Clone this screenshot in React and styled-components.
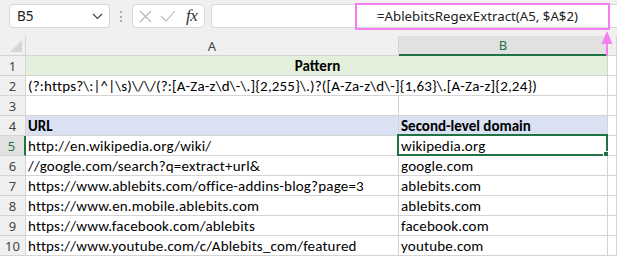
import React from "react";
import styled, { createGlobalStyle } from "styled-components";

const Global = createGlobalStyle`
  html, body { margin: 0; padding: 0; background: #f0f0f0; }
  body { width: 617px; height: 256px; overflow: hidden; }
`;

const Page = styled.div`
  position: relative;
  width: 617px;
  height: 256px;
  background: #f0f0f0;
  overflow: hidden;
`;

const Toolbar = styled.div`
  height: 36px;
  display: flex;
  align-items: flex-start;
  padding: 4px 0 0 9px;
  box-sizing: border-box;
`;

const Box = styled.div`
  height: 24px;
  box-sizing: border-box;
  background: #fff;
  border: 1px solid #d6d6d6;
  border-radius: 4px;
  display: flex;
  align-items: center;
`;

const NameBox = styled(Box)`
  width: 101px;
  padding: 0 6px 0 7px;
  justify-content: space-between;
  font-family: "Noto Sans", "Open Sans", sans-serif;
  font-size: 13.5px;
  color: #222;
`;

const Dots = styled.div`
  width: 22px;
  display: flex;
  flex-direction: column;
  align-items: center;
  gap: 2.5px;
  padding-top: 7px;
  & > span { width: 2px; height: 2px; background: #9a9a9a; border-radius: 1px; }
`;

const ButtonsBox = styled(Box)`
  width: 73px;
  padding: 0 0 0 6px;
  gap: 8px;
`;

const Fx = styled.span`
  font-family: "Liberation Serif", serif;
  font-style: italic;
  font-size: 17px;
  color: #333;
  margin-left: 2px;
  letter-spacing: -0.5px;
`;

const FormulaBox = styled(Box)`
  flex: 1;
  margin-left: 6px;
  border-right: none;
  border-radius: 4px 0 0 4px;
  font-family: "Noto Sans", "Open Sans", sans-serif;
  font-size: 13.25px;
  color: #222;
  padding-left: 165px;
  white-space: nowrap;
`;

const Highlight = styled.div`
  position: absolute;
  left: 355px;
  top: 3px;
  width: 255px;
  height: 27px;
  box-sizing: border-box;
  border: 2px solid #f47ef2;
  pointer-events: none;
`;

const Arrow = styled.svg`
  position: absolute;
  left: 600px;
  top: 30px;
  pointer-events: none;
`;

const Grid = styled.div`
  display: grid;
  grid-template-columns: 26px 373px 209px 1fr;
  grid-auto-rows: 20px;
`;

const Cell = styled.div`
  box-sizing: border-box;
  border-right: 1px solid #d4d4d4;
  border-bottom: 1px solid #d4d4d4;
  background: ${(p) => p.$bg || "#fff"};
  font-family: "Carlito", "Lato", sans-serif;
  font-size: 15px;
  letter-spacing: ${(p) => (p.$bold ? "0" : "0.18px")};
  color: #000;
  font-weight: ${(p) => (p.$bold ? 700 : 400)};
  padding: 1px 0 0 2px;
  display: flex;
  align-items: center;
  white-space: nowrap;
  grid-column: ${(p) => p.$span || "auto"};
  justify-content: ${(p) => (p.$center ? "center" : "flex-start")};
  position: relative;
`;

const ColHead = styled.div`
  box-sizing: border-box;
  background: ${(p) => (p.$sel ? "#e1e1e1" : "#f0f0f0")};
  border-right: 1px solid ${(p) => (p.$sel ? "#f0f0f0" : "#d4d4d4")};
  border-bottom: ${(p) => (p.$sel ? "2px solid #217346" : "1px solid #d4d4d4")};
  color: ${(p) => (p.$sel ? "#217346" : "#444")};
  font-family: "Noto Sans", "Open Sans", sans-serif;
  font-size: 13px;
  display: flex;
  align-items: center;
  justify-content: center;
`;

const Corner = styled.div`
  position: relative;
  box-sizing: border-box;
  background: #f0f0f0;
  border-right: 1px solid #d4d4d4;
  border-bottom: 1px solid #d4d4d4;
  &::after {
    content: "";
    position: absolute;
    right: 3px;
    bottom: 3px;
    width: 0;
    height: 0;
    border-left: 12px solid transparent;
    border-bottom: 12px solid #d6d6d6;
  }
`;

const RowHead = styled.div`
  box-sizing: border-box;
  background: ${(p) => (p.$sel ? "#e1e1e1" : "#f0f0f0")};
  border-right: ${(p) => (p.$sel ? "2px solid #217346" : "1px solid #d4d4d4")};
  border-bottom: 1px solid #d4d4d4;
  color: ${(p) => (p.$sel ? "#217346" : "#444")};
  font-family: "Noto Sans", "Open Sans", sans-serif;
  font-size: 13px;
  display: flex;
  align-items: center;
  justify-content: center;
  padding-right: ${(p) => (p.$sel ? "1px" : "0")};
`;

const Selection = styled.div`
  position: absolute;
  left: -2px;
  top: -2px;
  right: -1px;
  bottom: -1px;
  border: 2px solid #217346;
  pointer-events: none;
  &::after {
    content: "";
    position: absolute;
    right: -5px;
    bottom: -5px;
    width: 6px;
    height: 6px;
    background: #217346;
    border: 1px solid #fff;
  }
`;

const regex =
  "(?:https?\\:|^|\\s)\\/\\/(?:[A-Za-z\\d\\-\\.]{2,255}\\.)?([A-Za-z\\d\\-]{1,63}\\.[A-Za-z]{2,24})";

const rows = [
  ["http://en.wikipedia.org/wiki/", "wikipedia.org"],
  ["//google.com/search?q=extract+url&", "google.com"],
  ["https://www.ablebits.com/office-addins-blog?page=3", "ablebits.com"],
  ["https://www.en.mobile.ablebits.com", "ablebits.com"],
  ["https://www.facebook.com/ablebits", "facebook.com"],
  ["https://www.youtube.com/c/Ablebits_com/featured", "youtube.com"],
];

export default function App() {
  return (
    <Page>
      <Global />
      <Toolbar>
        <NameBox>
          <span>B5</span>
          <svg width="11" height="7" viewBox="0 0 11 7">
            <path d="M1 1l4.5 4.5L10 1" fill="none" stroke="#444" strokeWidth="1.2" />
          </svg>
        </NameBox>
        <Dots>
          <span />
          <span />
          <span />
        </Dots>
        <ButtonsBox>
          <svg width="13" height="13" viewBox="0 0 13 13">
            <path d="M1 1l11 11M12 1L1 12" stroke="#b4b4b4" strokeWidth="1.1" />
          </svg>
          <svg width="16" height="12" viewBox="0 0 16 12">
            <path d="M1 6l5 5L15 1" fill="none" stroke="#b4b4b4" strokeWidth="1.1" />
          </svg>
          <Fx>fx</Fx>
        </ButtonsBox>
        <FormulaBox>=AblebitsRegexExtract(A5, $A$2)</FormulaBox>
      </Toolbar>
      <Highlight />
      <Arrow width="14" height="104" viewBox="0 0 14 104">
        <path d="M7 1L12.5 14H1.5Z" fill="#f47ef2" />
        <rect x="6" y="10" width="2" height="94" fill="#f47ef2" />
      </Arrow>
      <Grid>
        <Corner />
        <ColHead>A</ColHead>
        <ColHead $sel>B</ColHead>
        <ColHead />

        <RowHead>1</RowHead>
        <Cell $bg="#e2efda" $bold $center $span="span 2">Pattern</Cell>
        <Cell />

        <RowHead>2</RowHead>
        <Cell $span="span 2">{regex}</Cell>
        <Cell />

        <RowHead>3</RowHead>
        <Cell />
        <Cell />
        <Cell />

        <RowHead>4</RowHead>
        <Cell $bg="#d9e1f2" $bold>URL</Cell>
        <Cell $bg="#d9e1f2" $bold>Second-level domain</Cell>
        <Cell />

        {rows.map(([a, b], i) => (
          <React.Fragment key={i}>
            <RowHead $sel={i === 0}>{i + 5}</RowHead>
            <Cell>{a}</Cell>
            <Cell>
              {b}
              {i === 0 && <Selection />}
            </Cell>
            <Cell />
          </React.Fragment>
        ))}
      </Grid>
    </Page>
  );
}
